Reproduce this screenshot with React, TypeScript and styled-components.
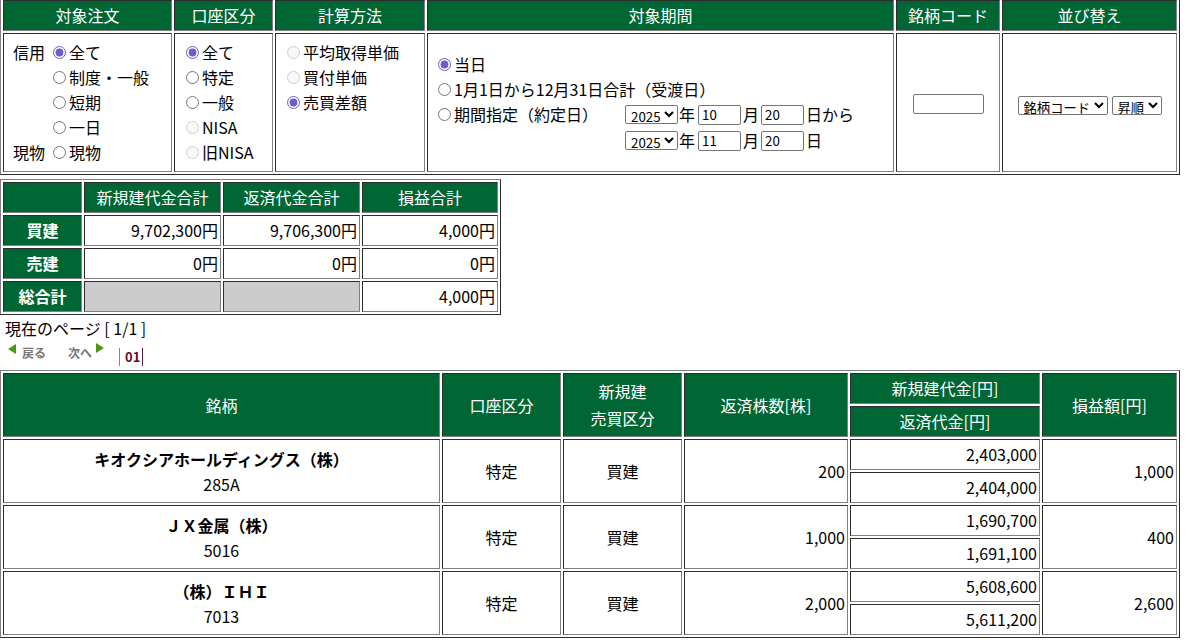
import React from 'react';
import styled, { createGlobalStyle } from 'styled-components';

const FONT = '"Noto Sans CJK JP", "Noto Sans", sans-serif';

const GlobalStyle = createGlobalStyle`
  html, body { margin: 0; padding: 0; background: #fff; }
  body { font-family: ${FONT}; font-size: 16px; color: #000; }
`;

const Page = styled.div`
  margin-top: -3px;
`;

const Grid = styled.table<{ $w: number; $mt?: number }>`
  width: ${(p) => p.$w}px;
  table-layout: fixed;
  border-collapse: separate;
  border-spacing: 2px;
  border: 1px outset #808080;
  background: #fff;
  margin-top: ${(p) => p.$mt ?? 0}px;
`;

const Col = styled.col<{ $w: number }>`
  width: ${(p) => p.$w}px;
`;

const Row = styled.tr<{ $h: number }>`
  height: ${(p) => p.$h}px;
`;

const Head = styled.th<{ $bold?: boolean }>`
  background: #006633;
  color: #fff;
  font-weight: ${(p) => (p.$bold ? 'bold' : 'normal')};
  border: 1px inset #808080;
  padding: 0 2px;
  text-align: center;
  vertical-align: middle;
  line-height: 23px;
  white-space: nowrap;
`;

const TallHead = styled(Head)`
  line-height: 27px;
`;

const Cell = styled.td<{ $align?: string; $valign?: string; $pad?: string; $bg?: string }>`
  border: 1px inset #808080;
  text-align: ${(p) => p.$align ?? 'left'};
  vertical-align: ${(p) => p.$valign ?? 'middle'};
  padding: ${(p) => p.$pad ?? '0 3px'};
  background: ${(p) => p.$bg ?? '#fff'};
  line-height: 23px;
  white-space: nowrap;
`;

/* ---------- filter controls ---------- */

const OptionList = styled.div<{ $cols?: string }>`
  display: grid;
  grid-template-columns: ${(p) => p.$cols ?? 'auto'};
  grid-auto-rows: 25px;
  align-items: center;
  justify-content: start;
`;

const SideLabel = styled.span`
  white-space: nowrap;
`;

const OptionLabel = styled.label`
  display: flex;
  align-items: center;
  height: 25px;
  white-space: nowrap;
`;

const Radio = styled.input`
  width: 13px;
  height: 13px;
  margin: 0 3px 0 5px;
  flex: none;
  accent-color: #6b5fc9;
`;

function Option({ name, label, checked, disabled }: { name: string; label: string; checked?: boolean; disabled?: boolean }) {
  return (
    <OptionLabel>
      <Radio type="radio" name={name} defaultChecked={checked} disabled={disabled} />
      {label}
    </OptionLabel>
  );
}

const PeriodGrid = styled.div`
  display: grid;
  grid-template-columns: 192px auto;
  grid-template-rows: 25px 25px 26px 26px;
  align-items: center;
`;

const DateRow = styled.div<{ $row: number }>`
  grid-column: 2;
  grid-row: ${(p) => p.$row};
  display: flex;
  align-items: center;
  white-space: nowrap;
`;

const Select = styled.select`
  font-family: ${FONT};
  font-size: 13.333px;
  height: 19px;
  padding: 0 0 0 1px;
  color: #000;
  background: #fff;
  border: 1px solid #767676;
  border-radius: 2px;
`;

const TextBox = styled.input<{ $w: number }>`
  box-sizing: border-box;
  width: ${(p) => p.$w}px;
  height: 20px;
  font-family: ${FONT};
  font-size: 13.333px;
  padding: 0 3px;
  border: 1px solid #767676;
  border-radius: 2px;
  color: #000;
  background: #fff;
`;

const Unit = styled.span<{ $ml: number; $mr: number }>`
  margin: 0 ${(p) => p.$mr}px 0 ${(p) => p.$ml}px;
`;

const SortBox = styled.div`
  display: flex;
  justify-content: center;
  align-items: center;
  gap: 4px;
  padding-top: 5px;
`;

/* ---------- summary / paging ---------- */

const PageInfo = styled.div`
  padding: 2px 0 0 5px;
  line-height: 23px;
`;

const Pager = styled.div`
  display: flex;
  align-items: flex-start;
  height: 30px;
  padding-left: 8px;
`;

const NavLink = styled.span<{ $ml?: number }>`
  display: flex;
  align-items: flex-start;
  margin-left: ${(p) => p.$ml ?? 0}px;
  font-size: 12px;
  font-weight: bold;
  color: #777;
  line-height: 16px;
  padding-top: 5px;
`;

const Arrow = styled.svg<{ $mt: number; $gap: string }>`
  width: 8px;
  height: 10px;
  margin: ${(p) => p.$mt}px 0 0 0;
  ${(p) => p.$gap}
  flex: none;
`;

const PageNums = styled.span`
  margin: 8px 0 0 15px;
  display: flex;
  align-items: center;
  font-size: 13px;
  font-weight: bold;
  line-height: 18px;
`;

const Bar = styled.span<{ $c: string }>`
  display: inline-block;
  width: 1px;
  height: 18px;
  background: ${(p) => p.$c};
`;

const Current = styled.span`
  color: #6b0b17;
  padding: 0 2px 0 5px;
`;

/* ---------- results ---------- */

const Name = styled.div`
  font-weight: bold;
  line-height: 25px;
`;

const Code = styled.div`
  line-height: 25px;
`;

const FILTER_COLS = [169, 99, 150, 467, 104, 175];
const SUMMARY_COLS = [79, 137, 137, 136];
const RESULT_COLS = [437, 119, 119, 164, 190, 135];

const summaryRows = [
  { label: '買建', values: ['9,702,300円', '9,706,300円', '4,000円'] },
  { label: '売建', values: ['0円', '0円', '0円'] },
];

const results = [
  { name: 'キオクシアホールディングス（株）', code: '285A', qty: '200', open: '2,403,000', close: '2,404,000', pl: '1,000' },
  { name: 'ＪＸ金属（株）', code: '5016', qty: '1,000', open: '1,690,700', close: '1,691,100', pl: '400' },
  { name: '（株）ＩＨＩ', code: '7013', qty: '2,000', open: '5,608,600', close: '5,611,200', pl: '2,600' },
];

function DateLine({ row, month, day, tail }: { row: number; month: string; day: string; tail: string }) {
  return (
    <DateRow $row={row}>
      <Select defaultValue="2025">
        <option>2024</option>
        <option>2025</option>
      </Select>
      <Unit $ml={1} $mr={3}>年</Unit>
      <TextBox type="text" $w={43} defaultValue={month} />
      <Unit $ml={2} $mr={2}>月</Unit>
      <TextBox type="text" $w={43} defaultValue={day} />
      <Unit $ml={2} $mr={0}>{tail}</Unit>
    </DateRow>
  );
}

export default function App() {
  return (
    <Page>
      <GlobalStyle />
      <Grid $w={1180}>
        <colgroup>
          {FILTER_COLS.map((w, i) => (
            <Col key={i} $w={w} />
          ))}
        </colgroup>
        <tbody>
          <Row $h={31}>
            <Head>対象注文</Head>
            <Head>口座区分</Head>
            <Head>計算方法</Head>
            <Head>対象期間</Head>
            <Head>銘柄コード</Head>
            <Head>並び替え</Head>
          </Row>
          <Row $h={139}>
            <Cell $valign="top" $pad="6px 0 0 9px">
              <OptionList $cols="35px auto">
                <SideLabel>信用</SideLabel>
                <Option name="order" label="全て" checked />
                <span />
                <Option name="order" label="制度・一般" />
                <span />
                <Option name="order" label="短期" />
                <span />
                <Option name="order" label="一日" />
                <SideLabel>現物</SideLabel>
                <Option name="order" label="現物" />
              </OptionList>
            </Cell>
            <Cell $valign="top" $pad="6px 0 0 6px">
              <OptionList>
                <Option name="acct" label="全て" checked />
                <Option name="acct" label="特定" />
                <Option name="acct" label="一般" />
                <Option name="acct" label="NISA" disabled />
                <Option name="acct" label="旧NISA" disabled />
              </OptionList>
            </Cell>
            <Cell $valign="top" $pad="6px 0 0 6px">
              <OptionList>
                <Option name="calc" label="平均取得単価" disabled />
                <Option name="calc" label="買付単価" disabled />
                <Option name="calc" label="売買差額" checked />
              </OptionList>
            </Cell>
            <Cell $pad="0 0 0 5px">
              <PeriodGrid>
                <Option name="period" label="当日" checked />
                <span />
                <Option name="period" label="1月1日から12月31日合計（受渡日）" />
                <span />
                <Option name="period" label="期間指定（約定日）" />
                <DateLine row={3} month="10" day="20" tail="日から" />
                <DateLine row={4} month="11" day="20" tail="日" />
              </PeriodGrid>
            </Cell>
            <Cell $align="center">
              <TextBox type="text" $w={71} defaultValue="" />
            </Cell>
            <Cell $align="center">
              <SortBox>
                <Select defaultValue="code">
                  <option value="code">銘柄コード</option>
                </Select>
                <Select defaultValue="asc">
                  <option value="asc">昇順</option>
                </Select>
              </SortBox>
            </Cell>
          </Row>
        </tbody>
      </Grid>

      <Grid $w={501} $mt={4}>
        <colgroup>
          {SUMMARY_COLS.map((w, i) => (
            <Col key={i} $w={w} />
          ))}
        </colgroup>
        <tbody>
          <Row $h={31}>
            <Head />
            <Head>新規建代金合計</Head>
            <Head>返済代金合計</Head>
            <Head>損益合計</Head>
          </Row>
          {summaryRows.map((r) => (
            <Row $h={31} key={r.label}>
              <Head $bold>{r.label}</Head>
              {r.values.map((v, i) => (
                <Cell key={i} $align="right" $pad="0 2px 0 0">
                  {v}
                </Cell>
              ))}
            </Row>
          ))}
          <Row $h={31}>
            <Head $bold>総合計</Head>
            <Cell $bg="#cccccc" />
            <Cell $bg="#cccccc" />
            <Cell $align="right" $pad="0 2px 0 0">
              4,000円
            </Cell>
          </Row>
        </tbody>
      </Grid>

      <PageInfo>現在のページ [ 1/1 ]</PageInfo>
      <Pager>
        <NavLink>
          <Arrow viewBox="0 0 8 10" $mt={-1} $gap="margin-right: 6px;">
            <polygon points="8,0 8,10 0,5" fill="#4f9412" />
          </Arrow>
          戻る
        </NavLink>
        <NavLink $ml={22}>
          次へ
          <Arrow viewBox="0 0 8 10" $mt={-2} $gap="margin-left: 4px;">
            <polygon points="0,0 0,10 8,5" fill="#4f9412" />
          </Arrow>
        </NavLink>
        <PageNums>
          <Bar $c="#c9761e" />
          <Current>01</Current>
          <Bar $c="#5a1740" />
        </PageNums>
      </Pager>

      <Grid $w={1180}>
        <colgroup>
          {RESULT_COLS.map((w, i) => (
            <Col key={i} $w={w} />
          ))}
        </colgroup>
        <tbody>
          <Row $h={31}>
            <Head rowSpan={2}>銘柄</Head>
            <Head rowSpan={2}>口座区分</Head>
            <TallHead rowSpan={2}>
              新規建
              <br />
              売買区分
            </TallHead>
            <Head rowSpan={2}>返済株数[株]</Head>
            <Head>新規建代金[円]</Head>
            <Head rowSpan={2}>損益額[円]</Head>
          </Row>
          <Row $h={31}>
            <Head>返済代金[円]</Head>
          </Row>
          {results.map((r) => (
            <React.Fragment key={r.code}>
              <Row $h={31}>
                <Cell rowSpan={2} $align="center" $pad="1px 3px 0">
                  <Name>{r.name}</Name>
                  <Code>{r.code}</Code>
                </Cell>
                <Cell rowSpan={2} $align="center">
                  特定
                </Cell>
                <Cell rowSpan={2} $align="center">
                  買建
                </Cell>
                <Cell rowSpan={2} $align="right" $pad="0 2px 0 0">
                  {r.qty}
                </Cell>
                <Cell $align="right" $pad="0 2px 0 0">
                  {r.open}
                </Cell>
                <Cell rowSpan={2} $align="right" $pad="0 2px 0 0">
                  {r.pl}
                </Cell>
              </Row>
              <Row $h={31}>
                <Cell $align="right" $pad="0 2px 0 0">
                  {r.close}
                </Cell>
              </Row>
            </React.Fragment>
          ))}
        </tbody>
      </Grid>
    </Page>
  );
}
